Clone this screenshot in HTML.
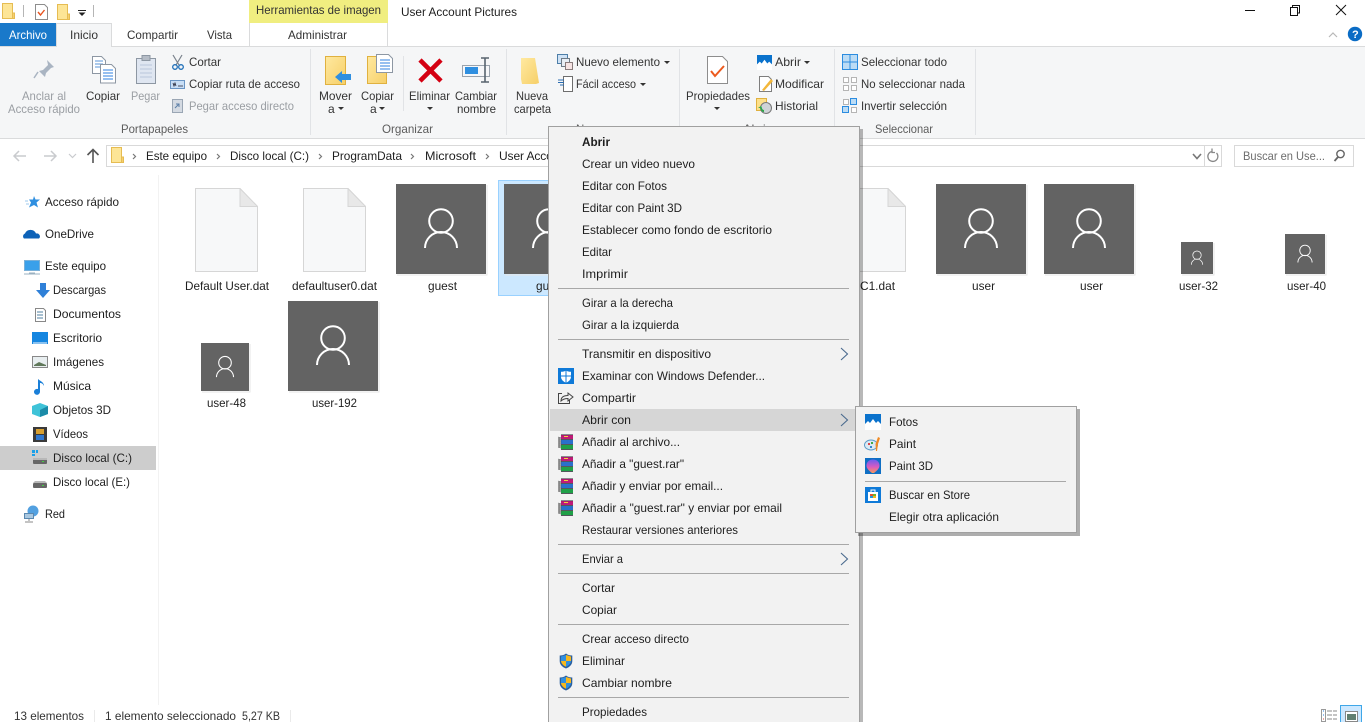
<!DOCTYPE html>
<html lang="es"><head><meta charset="utf-8"><title>User Account Pictures</title>
<style>
html,body{margin:0;padding:0;background:#fff;width:1365px;height:722px;overflow:hidden}
svg{display:block}
text{font-family:"Liberation Sans",sans-serif;font-size:12px;fill:#1e1e1e}
.g{fill:#9a9ea3}.l{fill:#5c5c5c}.d{fill:#333}
</style></head><body>
<svg width="1365" height="722" viewBox="0 0 1365 722" xmlns="http://www.w3.org/2000/svg">
<defs>
<linearGradient id="fy" x1="0" y1="0" x2="1" y2="1"><stop offset="0" stop-color="#ffe9a0"/><stop offset="1" stop-color="#f6cf68"/></linearGradient>
<linearGradient id="bal" x1="0" y1="0" x2="0" y2="1"><stop offset="0" stop-color="#6a5df0"/><stop offset=".55" stop-color="#d85bc0"/><stop offset="1" stop-color="#f59a5a"/></linearGradient>
<symbol id="u" viewBox="0 0 90 90"><rect width="90" height="90" fill="#636363"/><circle cx="45" cy="37" r="11.8" fill="none" stroke="#fff" stroke-width="2"/><path d="M29 64a16 16 0 0 1 32 0" fill="none" stroke="#fff" stroke-width="2"/></symbol>
<symbol id="page" viewBox="0 0 63 84"><path d="M.5.5H45L62.5 18.500V83.500H.5Z" fill="#f7f8f9" stroke="#d6d6d6"/><path d="M45 .5V18.500H62.500Z" fill="#e8e8e8" stroke="#d6d6d6"/></symbol>
<symbol id="rar" viewBox="0 0 16 16"><path d="M3 1h12v4H3z" fill="#c01a78"/><path d="M3 6h12v4H3z" fill="#2a70cc"/><path d="M3 11h12v4H3z" fill="#20a048"/><path d="M3 .8h12M3 5.500h12M3 10.500h12M3 15.500h12" stroke="#20242c" stroke-width=".7"/><path d="M0 3l3 1-3 1 3 1-3 1 3 1-3 1 3 1-3 1 3 1-3 1 3 1" fill="none" stroke="#444" stroke-width=".6"/><path d="M6 2h4v1H6z" fill="#f3d23c"/></symbol>
<symbol id="shield" viewBox="0 0 14 16"><path d="M7 .5C5 2 3 2.500.7 2.500V8c0 3.500 2.500 6 6.300 7.500C10.800 14 13.300 11.500 13.300 8V2.500C11 2.500 9 2 7 .5Z" fill="#2b5f9e"/><path d="M7 2 2 3.500V8h5Z" fill="#2f8fe0"/><path d="M7 2v6h5V3.500Z" fill="#f6b81e"/><path d="M2 8c.3 2.600 2.300 4.500 5 5.800V8Z" fill="#f6b81e"/><path d="M7 8v5.800C9.700 12.500 11.700 10.600 12 8Z" fill="#2f8fe0"/></symbol>
<symbol id="mt" viewBox="0 0 16 16"><rect width="16" height="16" fill="#fff"/><path d="M0 0h16v10l-3-3-2 2-3-4-3 4-2-2-3 3Z" fill="#0a72cc"/></symbol>
<symbol id="arrow" viewBox="0 0 9 14"><path d="M1 1l6.500 6L1 13" fill="none" stroke="#4a6a8e" stroke-width="1.100"/></symbol>
<symbol id="f" viewBox="0 0 13 16"><path d="M.5.500h10V15.500H.5Z" fill="#fde596" stroke="#e6bc52"/><path d="M10.500 10h2v5.500h-2z" fill="#f6d070" stroke="#e6bc52"/></symbol>
</defs>

<!-- title bar -->
<use href="#f" x="2" y="3" width="13" height="16"/>
<path d="M23.500 5v12" stroke="#b5b5b5"/>
<path d="M35.500 4.500h9l3 3v12h-12z" fill="#fff" stroke="#8d8d8d"/><path d="M38 12l2.500 3 4-5" fill="none" stroke="#e8531f" stroke-width="1.400"/>
<use href="#f" x="57" y="4" width="13" height="16"/>
<path d="M78 10.500h8" stroke="#222"/><path d="M78.500 12.500h7l-3.500 3.500z" fill="#222"/>
<path d="M93.500 5v12" stroke="#b5b5b5"/>
<rect x="249" y="0" width="139" height="23" fill="#f0ee80"/>
<text x="256" y="14" textLength="125" lengthAdjust="spacingAndGlyphs" class="d">Herramientas de imagen</text>
<text x="401" y="16" textLength="116" lengthAdjust="spacingAndGlyphs">User Account Pictures</text>
<path d="M1245 10.500h10" stroke="#111"/>
<path d="M1290.500 7.500h7v8h-7zM1292.500 7V5.500h7v7.500h-2" fill="none" stroke="#111"/>
<path d="M1336 5l10 10M1346 5l-10 10" stroke="#111" fill="none"/>

<!-- tabs -->
<rect x="0" y="23" width="56" height="23" fill="#1979ca"/>
<text x="9" y="39" textLength="38" lengthAdjust="spacingAndGlyphs" style="fill:#fff">Archivo</text>
<text x="127" y="39" textLength="51" lengthAdjust="spacingAndGlyphs" class="d">Compartir</text>
<text x="207" y="39" textLength="25" lengthAdjust="spacingAndGlyphs" class="d">Vista</text>
<text x="288" y="39" textLength="59" lengthAdjust="spacingAndGlyphs" class="d">Administrar</text>
<path d="M249.500 23v23M387.500 23v23" stroke="#dadbdc"/>
<path d="M1329 37l4-4 4 4" fill="none" stroke="#b8b8b8" stroke-width="1.200"/>
<circle cx="1355" cy="34" r="7.200" fill="#0a6cc5"/>
<text x="1352" y="38" style="font-size:11px;font-weight:bold;fill:#fff">?</text>

<!-- ribbon -->
<rect x="0" y="46" width="1365" height="93" fill="#f5f6f7"/>
<path d="M0 46.500h57M111 46.500h1254M0 138.500h1365" stroke="#dadbdc"/>
<path d="M56.500 46V23.500H111.500V46" fill="#f5f6f7" stroke="#dadbdc"/>
<rect x="57" y="44" width="54" height="4" fill="#f5f6f7"/>
<text x="70" y="39" textLength="28" lengthAdjust="spacingAndGlyphs" class="d">Inicio</text>
<path d="M310.500 49v86M506.500 49v86M679.500 49v86M834.500 49v86M975.500 49v86" stroke="#e1e3e6"/>
<path d="M403.500 56v55" stroke="#e1e3e6"/>

<!-- portapapeles -->
<path d="M47 60l7 7-3 1-5 5-1 4-6-6 4-1 5-5z" fill="#a9b4c2"/><path d="M38 72l-4 6" stroke="#a9b4c2" stroke-width="1.500"/>
<path d="M92.500 56.500h9l4 4v13h-13z" fill="#fff" stroke="#8d97a3"/><path d="M95 61h8M95 64h8M95 67h8" stroke="#5a94d8"/>
<path d="M100.500 64.500h11l4 4v14.500h-15z" fill="#fff" stroke="#8d97a3"/><path d="M103 70h10M103 73h10M103 76h10M103 79h10" stroke="#2f80e0"/>
<rect x="136.500" y="58.500" width="19" height="25" fill="#dfe6f1" stroke="#8d97a3"/><rect x="142" y="55.500" width="8" height="5" fill="#b5bcc6" stroke="#8d97a3"/><path d="M140 65h12M140 69h12M140 73h12M140 77h12" stroke="#b8c6da"/>
<text x="22" y="100" textLength="44" lengthAdjust="spacingAndGlyphs" class="g">Anclar al</text>
<text x="8" y="113" textLength="72" lengthAdjust="spacingAndGlyphs" class="g">Acceso rápido</text>
<text x="86" y="100" textLength="34" lengthAdjust="spacingAndGlyphs" class="d">Copiar</text>
<text x="131" y="100" textLength="29" lengthAdjust="spacingAndGlyphs" class="g">Pegar</text>
<path d="M173 55l6 10M182 55l-6 10" stroke="#7a828c" stroke-width="1.200"/><circle cx="175" cy="67" r="2.300" fill="none" stroke="#1f6fb8" stroke-width="1.300"/><circle cx="181" cy="67" r="2.300" fill="none" stroke="#1f6fb8" stroke-width="1.300"/>
<rect x="170.500" y="80.500" width="14" height="8" fill="#c8def5" stroke="#6a95c4"/><path d="M173 83l1 3 1-3 1 3M178 86h5" stroke="#223" fill="none" stroke-width=".8"/>
<rect x="172.500" y="99.500" width="10" height="13" fill="#d4dae2" stroke="#9aa6b4"/><path d="M175 108l4-4m-3 0h3v3" stroke="#5c7fa8" fill="none"/>
<text x="189" y="66" textLength="32" lengthAdjust="spacingAndGlyphs" class="d">Cortar</text>
<text x="189" y="88" textLength="111" lengthAdjust="spacingAndGlyphs" class="d">Copiar ruta de acceso</text>
<text x="189" y="110" textLength="105" lengthAdjust="spacingAndGlyphs" class="g">Pegar acceso directo</text>
<text x="121" y="133" textLength="67" lengthAdjust="spacingAndGlyphs" class="l">Portapapeles</text>

<!-- organizar -->
<path d="M325.500 56.500h20v28h-20z" fill="url(#fy)" stroke="#e0b13f"/>
<path d="M335 77l7-6v3h9v6h-9v3z" fill="#2f8fe0"/>
<path d="M367.500 56.500h19v27h-19z" fill="url(#fy)" stroke="#e0b13f"/>
<path d="M376.500 54.500h12l4 4v14h-16z" fill="#fff" stroke="#8d97a3"/><path d="M380 60h10M380 63h10M380 66h10M380 69h10" stroke="#2f80e0"/>
<path d="M420 60l21 21M441 60l-21 21" stroke="#d40012" stroke-width="4.600"/>
<rect x="462.500" y="65.500" width="27" height="11" fill="#f6f7f9" stroke="#9aa3ad"/><rect x="465" y="67" width="13" height="7" fill="#2f8fe0"/>
<path d="M481 58h8M485 58v24M481 82h8" stroke="#58646f" stroke-width="1.600" fill="none"/>
<text x="319" y="100" textLength="33" lengthAdjust="spacingAndGlyphs" class="d">Mover</text>
<text x="328" y="113" class="d">a</text><path d="M338 107h6l-3 3z" fill="#333"/>
<text x="361" y="100" textLength="33" lengthAdjust="spacingAndGlyphs" class="d">Copiar</text>
<text x="370" y="113" class="d">a</text><path d="M379 107h6l-3 3z" fill="#333"/>
<text x="409" y="100" textLength="41" lengthAdjust="spacingAndGlyphs" class="d">Eliminar</text>
<path d="M427 107h6l-3 3z" fill="#333"/>
<text x="455" y="100" textLength="42" lengthAdjust="spacingAndGlyphs" class="d">Cambiar</text>
<text x="457" y="113" textLength="39" lengthAdjust="spacingAndGlyphs" class="d">nombre</text>
<text x="382" y="133" textLength="51" lengthAdjust="spacingAndGlyphs" class="l">Organizar</text>

<!-- nuevo -->
<path d="M521 58h14l4 25-3 1h-14l-1-5z" fill="url(#fy)"/>
<text x="516" y="100" textLength="32" lengthAdjust="spacingAndGlyphs" class="d">Nueva</text>
<text x="514" y="113" textLength="37" lengthAdjust="spacingAndGlyphs" class="d">carpeta</text>
<rect x="557.500" y="54.500" width="10" height="9" fill="#cfe2f5" stroke="#4d7ea8"/><rect x="561.500" y="58.500" width="8" height="8" fill="#e8eef5" stroke="#6e7a86"/><rect x="565.500" y="62.500" width="7" height="7" fill="#f6e4e4" stroke="#8a7c7c"/>
<path d="M563.500 76.500h9v15h-9z" fill="#fff" stroke="#6e6e6e"/><path d="M558 80h6M558 82.500h6M560 85h4" stroke="#2b6cb0"/>
<text x="576" y="66" textLength="84" lengthAdjust="spacingAndGlyphs" class="d">Nuevo elemento</text><path d="M664 61h6l-3 3z" fill="#333"/>
<text x="576" y="88" textLength="60" lengthAdjust="spacingAndGlyphs" class="d">Fácil acceso</text><path d="M640 83h6l-3 3z" fill="#333"/>
<text x="576" y="133" textLength="33" lengthAdjust="spacingAndGlyphs" class="l">Nuevo</text>

<!-- abrir -->
<path d="M707.500 56.500h15l5 5v22h-20z" fill="#fff" stroke="#8d8d8d"/><path d="M711 71l4 5 9-10" fill="none" stroke="#ec5a1d" stroke-width="2"/>
<text x="686" y="100" textLength="64" lengthAdjust="spacingAndGlyphs" class="d">Propiedades</text><path d="M714 107h6l-3 3z" fill="#333"/>
<use href="#mt" x="757" y="55" width="15" height="15"/>
<path d="M759.500 76.500h9l3 3v12h-12z" fill="#fff" stroke="#7e7e7e"/><path d="M762 90l9-11 2 2-9 10z" fill="#f3b73a"/>
<path d="M756.500 98.500h10v12h-10z" fill="#fde08a" stroke="#e0b13f"/><circle cx="766" cy="108" r="5.500" fill="#cfd3d7" stroke="#777"/><path d="M762 108a5 5 0 0 0-1-2l-3 2h2.500c0 2 1.500 4 3.500 4v-2c-1 0-2-1-2-2z" fill="#2aa84a"/>
<text x="775" y="66" textLength="26" lengthAdjust="spacingAndGlyphs" class="d">Abrir</text><path d="M804 61h6l-3 3z" fill="#333"/>
<text x="775" y="88" textLength="49" lengthAdjust="spacingAndGlyphs" class="d">Modificar</text>
<text x="775" y="110" textLength="43" lengthAdjust="spacingAndGlyphs" class="d">Historial</text>
<text x="743" y="133" textLength="27" lengthAdjust="spacingAndGlyphs" class="l">Abrir</text>

<!-- seleccionar -->
<rect x="842.500" y="54.500" width="15" height="15" fill="#bcdcf5" stroke="#2b8ce0"/><path d="M850 55v14M843 62h14" stroke="#2b8ce0"/>
<path d="M843.500 77.500h5v5h-5zM851.500 77.500h5v5h-5zM843.500 85.500h5v5h-5zM851.500 85.500h5v5h-5z" fill="#fff" stroke="#b5b5b5"/>
<path d="M843.500 99.500h5v5h-5zM851.500 107.500h5v5h-5z" fill="#fff" stroke="#b5b5b5"/>
<path d="M850.500 98.500h6v6h-6zM842.500 106.500h6v6h-6z" fill="#bcdcf5" stroke="#2b8ce0"/>
<text x="861" y="66" textLength="86" lengthAdjust="spacingAndGlyphs" class="d">Seleccionar todo</text>
<text x="861" y="88" textLength="104" lengthAdjust="spacingAndGlyphs" class="d">No seleccionar nada</text>
<text x="861" y="110" textLength="86" lengthAdjust="spacingAndGlyphs" class="d">Invertir selección</text>
<text x="875" y="133" textLength="58" lengthAdjust="spacingAndGlyphs" class="l">Seleccionar</text>

<!-- address bar -->
<path d="M26 156H14m5-5-5 5 5 5M44 156h12m-5-5 5 5-5 5" fill="none" stroke="#c9cbce" stroke-width="1.500"/>
<path d="M69 154l3.500 3.500L76 154" fill="none" stroke="#c9cbce" stroke-width="1.200"/>
<path d="M93 163v-13m-5.500 5 5.500-5.500 5.500 5.500" fill="none" stroke="#555" stroke-width="1.600"/>
<rect x="106.500" y="145.500" width="1115" height="21" fill="#fff" stroke="#d9d9d9"/>
<path d="M1204.500 146v20" stroke="#d9d9d9"/>
<use href="#f" x="111" y="147" width="13" height="16"/>
<path d="M133 154l2.500 2.500-2.500 2.500M217 154l2.500 2.500-2.500 2.500M319 154l2.500 2.500-2.500 2.500M411 154l2.500 2.500-2.500 2.500M486 154l2.500 2.500-2.500 2.500" fill="none" stroke="#777" stroke-width="1.200"/>
<text x="146" y="160" textLength="61" lengthAdjust="spacingAndGlyphs">Este equipo</text>
<text x="230" y="160" textLength="79" lengthAdjust="spacingAndGlyphs">Disco local (C:)</text>
<text x="332" y="160" textLength="70" lengthAdjust="spacingAndGlyphs">ProgramData</text>
<text x="425" y="160" textLength="51" lengthAdjust="spacingAndGlyphs">Microsoft</text>
<text x="499" y="160" textLength="116">User Account Pictures</text>
<path d="M1193 154l4 4.500 4-4.500" fill="none" stroke="#777" stroke-width="1.600"/>
<path d="M1212 151.500a5 5 0 1 0 4.500 1.500M1212 148.500v4h3" fill="none" stroke="#888" stroke-width="1.300"/>
<rect x="1234.500" y="145.500" width="119" height="21" fill="#fff" stroke="#d9d9d9"/>
<text x="1243" y="160" textLength="82" lengthAdjust="spacingAndGlyphs" style="fill:#6d6d6d">Buscar en Use...</text>
<circle cx="1340.500" cy="154" r="3.700" fill="none" stroke="#666" stroke-width="1.400"/><path d="M1338 157l-3.500 4" stroke="#666" stroke-width="1.800"/>

<!-- sidebar -->
<path d="M158.500 175v530" stroke="#f2f2f2"/>
<rect x="0" y="446" width="156" height="24" fill="#cdcdcd"/>
<path d="M34 196l1.500 3.500H40l-3.500 3 1.500 5-4-2.500-5 2.500 2-5-2-3h4z" fill="#2f8fe0"/><path d="M25 201h3M26 204h3" stroke="#9cc8ee"/>
<path d="M24 238.500a3 3 0 0 1 1-5 6 6 0 0 1 11 0 3 3 0 0 1 3 5z" fill="#0d62b8"/>
<rect x="24.500" y="260.500" width="15" height="10" fill="#3aa0ea" stroke="#7ab0d8"/><path d="M29 273h6M24 274h16" stroke="#9ab0c0"/>
<path d="M40 283h6v7h4l-7 8-7-8h4z" fill="#2f80d8"/>
<path d="M35.500 308.500h8l2 2v11h-10z" fill="#fff" stroke="#888"/><path d="M37 312h6M37 315h6M37 318h6" stroke="#5080a0"/>
<rect x="32" y="332" width="16" height="12" fill="#1586e0"/><path d="M33 343h14" stroke="#fff"/>
<rect x="32.500" y="356.500" width="15" height="11" fill="#e8eef0" stroke="#888"/><path d="M34 365l5-3 7 3v1H34z" fill="#60785a"/>
<path d="M40 379v13a3 3 0 1 1-2-3v-10c2 2 6 3 6 7-1-2-2-3-4-3z" fill="#1a7fd8"/>
<path d="M40 403l8 3v8l-8 3-8-3v-8z" fill="#3fc3d8"/><path d="M40 410l8-4v8l-8 3z" fill="#1b8ba8"/>
<rect x="33" y="427" width="14" height="15" fill="#3a3a3a"/><rect x="36" y="429" width="8" height="5" fill="#d8a030"/><rect x="36" y="435" width="8" height="5" fill="#2f78d0"/>
<path d="M32 450h3v3h-3zM36 450h2v3h-2zM32 454h3v2h-3z" fill="#1aa0e8"/><rect x="33" y="459" width="14" height="5" rx="1" fill="#666"/><rect x="33" y="458" width="14" height="2" fill="#b8b8b8"/><rect x="42" y="461" width="2" height="1" fill="#4c4"/>
<rect x="33" y="483" width="14" height="5" rx="1" fill="#666"/><path d="M35 481h10l2 2H33z" fill="#b8b8b8"/><rect x="42" y="485" width="2" height="1" fill="#4c4"/>
<circle cx="33" cy="511" r="5.500" fill="#52a0e0"/><rect x="24.500" y="513.500" width="9" height="5" fill="#aac8e0" stroke="#5a88b0"/><path d="M29 519v2M25 522h8" stroke="#888"/>
<text x="45" y="206" textLength="74" lengthAdjust="spacingAndGlyphs">Acceso rápido</text>
<text x="45" y="238" textLength="49" lengthAdjust="spacingAndGlyphs">OneDrive</text>
<text x="45" y="270" textLength="61" lengthAdjust="spacingAndGlyphs">Este equipo</text>
<text x="53" y="294" textLength="53" lengthAdjust="spacingAndGlyphs">Descargas</text>
<text x="53" y="318" textLength="68" lengthAdjust="spacingAndGlyphs">Documentos</text>
<text x="53" y="342" textLength="49" lengthAdjust="spacingAndGlyphs">Escritorio</text>
<text x="53" y="366" textLength="51" lengthAdjust="spacingAndGlyphs">Imágenes</text>
<text x="53" y="390" textLength="38" lengthAdjust="spacingAndGlyphs">Música</text>
<text x="53" y="414" textLength="58" lengthAdjust="spacingAndGlyphs">Objetos 3D</text>
<text x="53" y="438" textLength="35" lengthAdjust="spacingAndGlyphs">Vídeos</text>
<text x="53" y="462" textLength="79" lengthAdjust="spacingAndGlyphs">Disco local (C:)</text>
<text x="53" y="486" textLength="77" lengthAdjust="spacingAndGlyphs">Disco local (E:)</text>
<text x="45" y="518" textLength="20" lengthAdjust="spacingAndGlyphs">Red</text>

<!-- files -->
<rect x="498.500" y="180.500" width="110" height="115" fill="#cce8ff" stroke="#99d1ff"/>
<use href="#page" x="195" y="188" width="63" height="84"/>
<use href="#page" x="303" y="188" width="63" height="84"/>
<use href="#page" x="843" y="188" width="63" height="84"/>
<path d="M397 275h90v-90" fill="none" stroke="#e6e6e6"/><path d="M505 275h90v-90" fill="none" stroke="#e6e6e6"/>
<path d="M937 275h90v-90M1045 275h90v-90M1182 275h32v-32M1286 275h40v-40M202 392h48v-48M289 392h90v-90" fill="none" stroke="#e6e6e6"/>
<use href="#u" x="396" y="184" width="90" height="90"/>
<use href="#u" x="504" y="184" width="90" height="90"/>
<use href="#u" x="936" y="184" width="90" height="90"/>
<use href="#u" x="1044" y="184" width="90" height="90"/>
<use href="#u" x="1181" y="242" width="32" height="32"/>
<use href="#u" x="1285" y="234" width="40" height="40"/>
<use href="#u" x="201" y="343" width="48" height="48"/>
<use href="#u" x="288" y="301" width="90" height="90"/>
<text x="185" y="290" textLength="84" lengthAdjust="spacingAndGlyphs">Default User.dat</text>
<text x="292" y="290" textLength="85" lengthAdjust="spacingAndGlyphs">defaultuser0.dat</text>
<text x="428" y="290" textLength="29" lengthAdjust="spacingAndGlyphs">guest</text>
<text x="536" y="290" textLength="29" lengthAdjust="spacingAndGlyphs">guest</text>
<text x="860" y="290" textLength="35" lengthAdjust="spacingAndGlyphs">C1.dat</text>
<text x="972" y="290" textLength="23" lengthAdjust="spacingAndGlyphs">user</text>
<text x="1080" y="290" textLength="23" lengthAdjust="spacingAndGlyphs">user</text>
<text x="1179" y="290" textLength="39" lengthAdjust="spacingAndGlyphs">user-32</text>
<text x="1287" y="290" textLength="39" lengthAdjust="spacingAndGlyphs">user-40</text>
<text x="207" y="407" textLength="39" lengthAdjust="spacingAndGlyphs">user-48</text>
<text x="312" y="407" textLength="45" lengthAdjust="spacingAndGlyphs">user-192</text>

<!-- status bar -->
<path d="M94.500 710v12M290.500 710v12" stroke="#eaeaea"/>
<text x="14" y="720" textLength="70" lengthAdjust="spacingAndGlyphs" class="d">13 elementos</text>
<text x="105" y="720" textLength="131" lengthAdjust="spacingAndGlyphs" class="d">1 elemento seleccionado</text>
<text x="242" y="720" textLength="38" lengthAdjust="spacingAndGlyphs" class="d">5,27 KB</text>
<rect x="1321.500" y="709.500" width="4" height="12" fill="#fff" stroke="#999"/>
<path d="M1323 711h1M1323 715h1" stroke="#2f80e0"/><path d="M1323 719h1" stroke="#d44"/>
<path d="M1327 711h5M1333 711h4M1327 715h5M1333 715h4M1327 719h5M1333 719h4" stroke="#888"/>
<rect x="1340.500" y="705.500" width="21" height="17" fill="#cce8ff" stroke="#3fa7e8"/>
<rect x="1345.500" y="711.500" width="12" height="10" fill="#fff" stroke="#888"/><rect x="1347" y="714" width="9" height="6" fill="#5f7f70"/>

<!-- context menu -->
<rect x="551" y="129" width="312" height="600" fill="#000" opacity=".28"/>
<rect x="548.500" y="126.500" width="311" height="600" fill="#f2f2f2" stroke="#a0a0a0"/>
<rect x="550" y="409" width="308" height="22" fill="#d6d6d6"/>
<path d="M558 288.500h291M558 339.500h291M558 544.500h291M558 573.500h291M558 624.500h291M558 697.500h291" stroke="#a8a8a8"/>
<text x="582" y="146" textLength="28" lengthAdjust="spacingAndGlyphs" style="font-weight:bold">Abrir</text>
<text x="582" y="168" textLength="113" lengthAdjust="spacingAndGlyphs">Crear un video nuevo</text>
<text x="582" y="190" textLength="85" lengthAdjust="spacingAndGlyphs">Editar con Fotos</text>
<text x="582" y="212" textLength="100" lengthAdjust="spacingAndGlyphs">Editar con Paint 3D</text>
<text x="582" y="234" textLength="190" lengthAdjust="spacingAndGlyphs">Establecer como fondo de escritorio</text>
<text x="582" y="256" textLength="30" lengthAdjust="spacingAndGlyphs">Editar</text>
<text x="582" y="278" textLength="46" lengthAdjust="spacingAndGlyphs">Imprimir</text>
<text x="582" y="307" textLength="91" lengthAdjust="spacingAndGlyphs">Girar a la derecha</text>
<text x="582" y="329" textLength="97" lengthAdjust="spacingAndGlyphs">Girar a la izquierda</text>
<text x="582" y="358" textLength="129" lengthAdjust="spacingAndGlyphs">Transmitir en dispositivo</text>
<text x="582" y="380" textLength="183" lengthAdjust="spacingAndGlyphs">Examinar con Windows Defender...</text>
<text x="582" y="402" textLength="54" lengthAdjust="spacingAndGlyphs">Compartir</text>
<text x="582" y="424" textLength="49" lengthAdjust="spacingAndGlyphs">Abrir con</text>
<text x="582" y="446" textLength="98" lengthAdjust="spacingAndGlyphs">Añadir al archivo...</text>
<text x="582" y="468" textLength="102" lengthAdjust="spacingAndGlyphs">Añadir a "guest.rar"</text>
<text x="582" y="490" textLength="141" lengthAdjust="spacingAndGlyphs">Añadir y enviar por email...</text>
<text x="582" y="512" textLength="200" lengthAdjust="spacingAndGlyphs">Añadir a "guest.rar" y enviar por email</text>
<text x="582" y="534" textLength="156" lengthAdjust="spacingAndGlyphs">Restaurar versiones anteriores</text>
<text x="582" y="563" textLength="41" lengthAdjust="spacingAndGlyphs">Enviar a</text>
<text x="582" y="592" textLength="33" lengthAdjust="spacingAndGlyphs">Cortar</text>
<text x="582" y="614" textLength="35" lengthAdjust="spacingAndGlyphs">Copiar</text>
<text x="582" y="643" textLength="107" lengthAdjust="spacingAndGlyphs">Crear acceso directo</text>
<text x="582" y="665" textLength="43" lengthAdjust="spacingAndGlyphs">Eliminar</text>
<text x="582" y="687" textLength="90" lengthAdjust="spacingAndGlyphs">Cambiar nombre</text>
<text x="582" y="716" textLength="65" lengthAdjust="spacingAndGlyphs">Propiedades</text>
<use href="#arrow" x="840" y="347" width="9" height="14"/>
<use href="#arrow" x="840" y="413" width="9" height="14"/>
<use href="#arrow" x="840" y="552" width="9" height="14"/>
<!-- defender -->
<rect x="558" y="368" width="16" height="16" fill="#0f7ad8"/>
<path d="M566 370.500c-1.500 1-3 1.300-5 1.300v4.700c0 3 2 4.900 5 6.300 3-1.400 5-3.300 5-6.300v-4.700c-2 0-3.500-.3-5-1.300z" fill="#fff"/>
<path d="M566 370v13M560 376h12" stroke="#0f7ad8"/>
<!-- share -->
<path d="M562 393.500h-3.500v10h11V400" fill="none" stroke="#444"/>
<path d="M561 401c0-4 3-5.500 7-5.500V393l5 4-5 4v-2.500c-3 0-5 .5-7 2.500z" fill="#f2f2f2" stroke="#444"/>
<use href="#rar" x="558" y="434" width="16" height="16"/>
<use href="#rar" x="558" y="456" width="16" height="16"/>
<use href="#rar" x="558" y="478" width="16" height="16"/>
<use href="#rar" x="558" y="500" width="16" height="16"/>
<use href="#shield" x="559" y="653" width="14" height="16"/>
<use href="#shield" x="559" y="675" width="14" height="16"/>

<!-- submenu -->
<rect x="858" y="409" width="222" height="127" fill="#000" opacity=".32"/>
<rect x="855.500" y="406.500" width="221" height="126" fill="#f2f2f2" stroke="#a0a0a0"/>
<path d="M865 481.500h201" stroke="#a8a8a8"/>
<use href="#mt" x="865" y="414" width="16" height="16"/>
<ellipse cx="871" cy="445" rx="6.500" ry="5" fill="#dbe9f3" stroke="#5c9cc8"/><path d="M868 443h2v2h-2z" fill="#d44"/><path d="M871 442h2v2h-2z" fill="#4a4"/><path d="M870 446h2v2h-2z" fill="#38c"/>
<path d="M878 437l2 1-2 6-1 7h-1l-.5-7z" fill="#f08a24"/>
<rect x="865" y="458" width="16" height="16" fill="#0f6fc4"/>
<path d="M873 459.500c-4 0-6.500 2.500-6.500 6 0 3 2.500 5 5.500 7.500h2c3-2.500 5.500-4.500 5.500-7.500 0-3.500-2.500-6-6.500-6z" fill="url(#bal)"/>
<rect x="865" y="487" width="16" height="16" fill="#0f7ad8"/>
<path d="M868 492h10v9h-10z" fill="#fff"/><path d="M871 492v-2h4v2" fill="none" stroke="#fff"/>
<path d="M870 494h3v2h-3z" fill="#e5502b"/><path d="M873 494h3v2h-3z" fill="#6bb52e"/><path d="M870 496h3v2h-3z" fill="#1e9be0"/><path d="M873 496h3v2h-3z" fill="#f5b81e"/>
<text x="889" y="426" textLength="29" lengthAdjust="spacingAndGlyphs">Fotos</text>
<text x="889" y="448" textLength="27" lengthAdjust="spacingAndGlyphs">Paint</text>
<text x="889" y="470" textLength="44" lengthAdjust="spacingAndGlyphs">Paint 3D</text>
<text x="889" y="499" textLength="81" lengthAdjust="spacingAndGlyphs">Buscar en Store</text>
<text x="889" y="521" textLength="110" lengthAdjust="spacingAndGlyphs">Elegir otra aplicación</text>
</svg>
</body></html>
